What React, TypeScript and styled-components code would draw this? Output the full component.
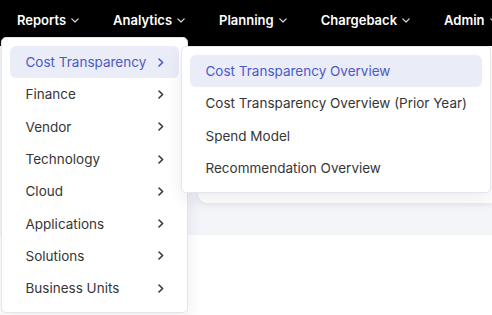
import React from "react";
import styled, { createGlobalStyle } from "styled-components";

const Global = createGlobalStyle`
  html, body { margin: 0; padding: 0; background: #ffffff; }
  body { font-family: Inter, "Noto Sans", "Liberation Sans", sans-serif; -webkit-font-smoothing: antialiased; }
  * { box-sizing: border-box; }
`;

const Page = styled.div`
  position: relative;
  width: 492px;
  height: 315px;
  overflow: hidden;
  background: #ffffff;
`;

const NavBar = styled.nav`
  display: flex;
  align-items: center;
  height: 46px;
  background: #000000;
  padding-bottom: 6px;
`;

const NavItem = styled.div`
  display: flex;
  align-items: center;
  gap: 5px;
  padding: 0 17px;
  color: #ffffff;
  font-size: 13px;
  font-weight: 600;
  white-space: nowrap;
  line-height: 20px;
`;

const Content = styled.main`
  display: flex;
  height: 189px;
  background: #f4f5f9;
  padding-left: 198px;
`;

const Card = styled.section`
  flex: 1;
  height: 157px;
  background: #ffffff;
  border-bottom-left-radius: 9px;
  box-shadow: 0 2px 4px rgba(20, 30, 60, 0.06);
`;

const Menu = styled.div<{ $left: number; $top: number; $width: number }>`
  position: absolute;
  left: ${(p) => p.$left}px;
  top: ${(p) => p.$top}px;
  width: ${(p) => p.$width}px;
  padding: 8px;
  background: #ffffff;
  border: 1px solid #e4e6ec;
  border-radius: 5px;
  box-shadow: 0 6px 18px rgba(20, 30, 60, 0.08);
  display: flex;
  flex-direction: column;
`;

const Item = styled.div<{ $active?: boolean }>`
  display: flex;
  align-items: center;
  justify-content: space-between;
  height: 32.3px;
  padding: 0 16px 0 15.5px;
  border-radius: 6px;
  font-size: 13.5px;
  font-weight: 400;
  white-space: nowrap;
  color: ${(p) => (p.$active ? "#4a5bc4" : "#363636")};
  background: ${(p) => (p.$active ? "#eaecf8" : "transparent")};
`;

const Chevron = styled.svg`
  margin-right: -1px;
  flex: none;
`;

const DownChevron = () => (
  <svg width="8" height="5" viewBox="0 0 8 5" fill="none">
    <path d="M0.8 0.8 L4 4 L7.2 0.8" stroke="#d8d8d8" strokeWidth="1.2" strokeLinecap="round" strokeLinejoin="round" />
  </svg>
);

const RightChevron = () => (
  <Chevron width="6" height="9" viewBox="0 0 6 9" fill="none">
    <path d="M1 1 L4.6 4.5 L1 8" stroke="currentColor" strokeWidth="1.6" strokeLinecap="round" strokeLinejoin="round" />
  </Chevron>
);

const navItems = ["Reports", "Analytics", "Planning", "Chargeback", "Admin"];
const reportItems = [
  "Cost Transparency",
  "Finance",
  "Vendor",
  "Technology",
  "Cloud",
  "Applications",
  "Solutions",
  "Business Units",
];
const subItems = [
  "Cost Transparency Overview",
  "Cost Transparency Overview (Prior Year)",
  "Spend Model",
  "Recommendation Overview",
];

export default function App() {
  return (
    <>
      <Global />
      <Page>
        <NavBar>
          {navItems.map((n) => (
            <NavItem key={n}>
              {n}
              <DownChevron />
            </NavItem>
          ))}
        </NavBar>
        <Content>
          <Card />
        </Content>
        <Menu $left={1} $top={37} $width={187}>
          {reportItems.map((r, i) => (
            <Item key={r} $active={i === 0}>
              {r}
              <RightChevron />
            </Item>
          ))}
        </Menu>
        <Menu $left={181} $top={46} $width={310}>
          {subItems.map((s, i) => (
            <Item key={s} $active={i === 0}>
              {s}
            </Item>
          ))}
        </Menu>
      </Page>
    </>
  );
}
